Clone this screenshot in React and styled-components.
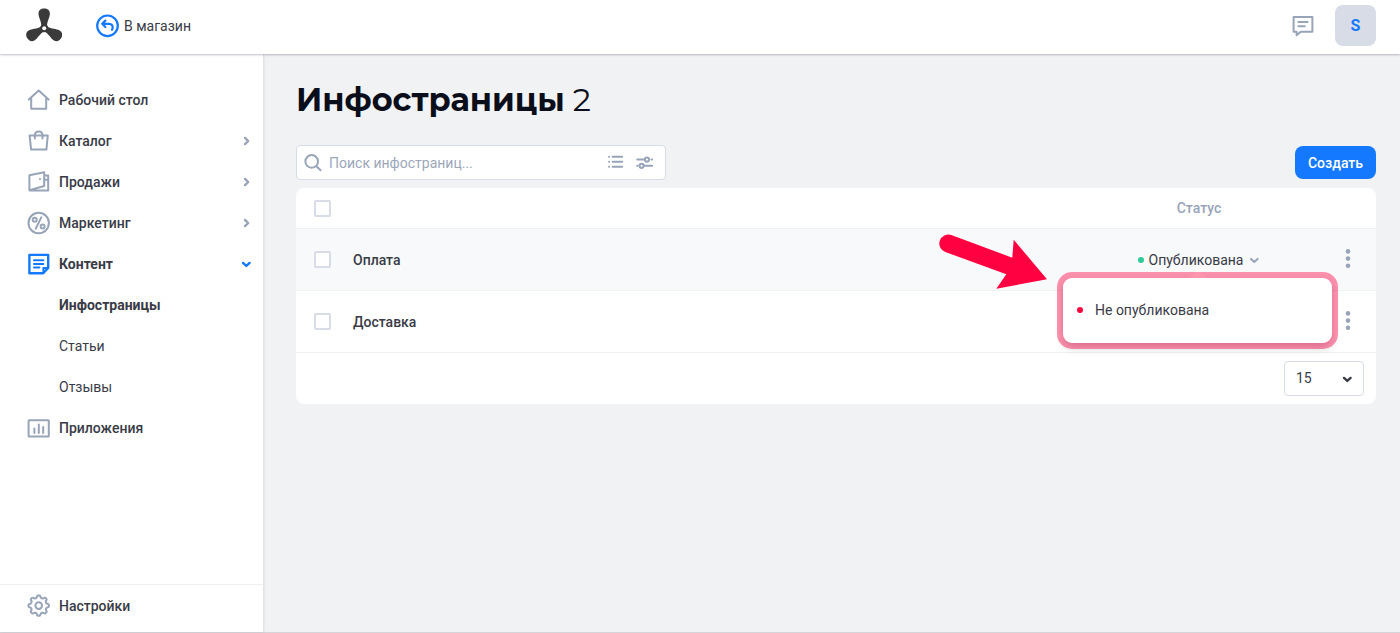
import React, {useState} from 'react';
import styled, {createGlobalStyle, css} from 'styled-components';

const colors = {
  text: '#393b47',
  title: '#0a0e1a',
  muted: '#98a4b8',
  line: '#d7dce6',
  primary: '#1479ff',
  danger: '#ff0040',
  success: '#2dcb96',
  page: '#f1f2f4',
};

const GlobalStyle = createGlobalStyle`
  * {
    box-sizing: border-box;
  }
  body {
    margin: 0;
    color: ${colors.text};
    background: ${colors.page};
    font: 400 14px/20px Roboto, 'Liberation Sans', sans-serif;
  }
  button, input, select {
    font: inherit;
    color: inherit;
  }
  button {
    padding: 0;
    border: 0;
    background: none;
    cursor: pointer;
  }
  a {
    color: inherit;
    text-decoration: none;
  }
`;

const Page = styled.div`
  display: flex;
  flex-direction: column;
  min-height: 100vh;
  border-bottom: 1px solid #d3d5d9;
`;

const Header = styled.header`
  display: flex;
  align-items: center;
  position: relative;
  z-index: 1;
  height: 54px;
  padding: 0 24px 3px 26px;
  background: white;
  box-shadow: 0 1px 2px rgba(40, 48, 70, 0.3);
`;

const Logo = styled.a`
  display: flex;
  margin-right: 34px;
`;

const StoreLink = styled.a`
  display: flex;
  align-items: center;
  gap: 4px;
  margin-right: auto;
`;

const IconButton = styled.button`
  display: flex;
  color: ${colors.muted};
`;

const Avatar = styled.button`
  width: 41px;
  height: 41px;
  margin-left: 20px;
  border-radius: 8px;
  background: ${colors.line};
  color: ${colors.primary};
  font-size: 16px;
  font-weight: 700;
`;

const Body = styled.div`
  display: flex;
  flex: 1;
`;

const Sidebar = styled.nav`
  display: flex;
  flex-direction: column;
  flex: 0 0 263px;
  padding-top: 25px;
  background: white;
  box-shadow: 1px 0 2px rgba(60, 70, 110, 0.12);
`;

const NavItem = styled.a`
  display: flex;
  align-items: center;
  gap: 8px;
  height: 41px;
  padding: 0 11px 0 27px;
  font-weight: ${p => (p.$active ? 700 : 500)};

  svg {
    color: ${p => (p.$active ? colors.primary : colors.muted)};
  }
  svg:last-child:not(:first-child) {
    margin-left: auto;
  }
  ${p => p.$sub && css`
    padding-left: 59px;
    font-weight: ${p.$active ? 700 : 400};
  `}
`;

const SidebarFooter = styled.div`
  margin-top: auto;
  padding-bottom: 6px;
  border-top: 1px solid #eff0f3;
`;

const Main = styled.main`
  flex: 1;
  min-width: 0;
  padding: 24px 24px 24px 33px;
`;

const Title = styled.h1`
  margin: 0 0 23px;
  color: ${colors.title};
  font: 700 32px/44px Montserrat, Inter, sans-serif;
`;

const Count = styled.span`
  margin-left: 8px;
  font-weight: 400;
`;

const Toolbar = styled.div`
  display: flex;
  align-items: center;
  justify-content: space-between;
  margin-bottom: 8px;
`;

const Search = styled.div`
  display: flex;
  align-items: center;
  gap: 4px;
  width: 370px;
  height: 35px;
  padding: 0 8px 0 4px;
  border: 1px solid ${colors.line};
  border-radius: 4px;
  background: white;
  color: ${colors.muted};

  label {
    display: flex;
  }
  input {
    flex: 1;
    min-width: 0;
    padding: 0;
    border: 0;
    outline: 0;
    background: none;
    color: ${colors.text};
  }
  input::placeholder {
    color: #9ca7b9;
    opacity: 1;
  }
`;

const CreateButton = styled.button`
  height: 33px;
  padding: 0 13px;
  border-radius: 8px;
  background: ${colors.primary};
  color: white;
  font-weight: 500;
`;

const Card = styled.section`
  border-radius: 8px;
  background: white;
`;

const Table = styled.table`
  width: 100%;
  border-spacing: 0;
  table-layout: fixed;
`;

const Cell = styled.td`
  width: ${p => p.$width || 'auto'};
  height: ${p => (p.as === 'th' ? '41px' : '62px')};
  padding: 0;
  border-bottom: 1px solid #f0f1f4;
  background: ${p => (p.$highlight ? '#f8f9fb' : 'transparent')};
  color: ${p => (p.as === 'th' ? colors.muted : colors.text)};
  text-align: ${p => p.$align || 'left'};
  font-weight: 500;
`;

const Checkbox = styled.input`
  appearance: none;
  display: block;
  width: 17px;
  height: 17px;
  margin: 0 0 0 18px;
  border: 2px solid ${colors.line};
  border-radius: 2px;
  background: white;

  &:checked {
    background: ${colors.primary};
  }
`;

const Status = styled.div`
  display: flex;
  justify-content: center;
  position: relative;
  font-weight: 400;
`;

const StatusButton = styled.button`
  display: flex;
  align-items: center;
  gap: 5px;

  svg {
    color: ${colors.muted};
  }
`;

const Dot = styled.span`
  width: 6px;
  height: 6px;
  border-radius: 50%;
  background: ${p => p.$color};
`;

const Dropdown = styled.div`
  position: absolute;
  top: 28px;
  left: 50%;
  z-index: 2;
  width: 269px;
  margin-left: -136px;
  border-radius: 9px;
  background: white;
  box-shadow: 0 4px 9px rgba(30, 36, 60, 0.3);

  &::before {
    content: '';
    position: absolute;
    top: -6px;
    left: 50%;
    width: 12px;
    height: 12px;
    margin-left: -6px;
    background: white;
    transform: rotate(45deg);
  }
  &::after {
    content: '';
    position: absolute;
    inset: -6px;
    border: 6px solid rgba(255, 0, 64, 0.42);
    border-radius: 15px;
    pointer-events: none;
  }
`;

const DropdownItem = styled.button`
  display: flex;
  align-items: center;
  gap: 12px;
  position: relative;
  width: 100%;
  height: 65px;
  padding: 0 14px;
  border-radius: 9px;
  background: white;
`;

const Pointer = styled.svg`
  position: absolute;
  top: -17px;
  right: 100%;
  z-index: 2;
  margin-right: 31px;
  pointer-events: none;
`;

const RowMenu = styled(IconButton)`
  margin: 0 auto;
`;

const CardFooter = styled.div`
  display: flex;
  justify-content: flex-end;
  padding: 8px 12px;
`;

const PageSize = styled.div`
  display: flex;
  align-items: center;
  position: relative;

  select {
    appearance: none;
    width: 80px;
    height: 35px;
    padding: 0 11px 2px;
    border: 1px solid ${colors.line};
    border-radius: 4px;
    background: white;
  }
  svg {
    position: absolute;
    right: 11px;
    pointer-events: none;
  }
`;

const Icon = ({size = 24, width = 2, children}) => (
  <svg width={size} height={size} viewBox={`0 0 ${size} ${size}`} fill="none" stroke="currentColor"
    strokeWidth={width} strokeLinecap="round" strokeLinejoin="round" aria-hidden="true">
    {children}
  </svg>
);

const ChevronIcon = ({down, width = 2.4}) => (
  <Icon size={12} width={width}>
    <path d={down ? 'M3 4.9 6.3 7.9l3.3-3' : 'M5 2.9 8.2 6 5 9.1'}/>
  </Icon>
);

const BLADE = 'M-2.8-1C-2.8-8-5.7-10-5.7-14.6C-5.7-17.8-3.4-19.7 0-19.7C3.4-19.7 5.7-17.8 5.7-14.6C5.7-10 2.8-8 2.8-1Z';

const PropellerLogo = () => (
  <svg width="36" height="36" viewBox="0 0 36 36" fill="#3a3a3a" aria-hidden="true">
    <g transform="translate(18.2 20.2)">
      {[0, 120, 240].map(angle => <path key={angle} d={BLADE} transform={`rotate(${angle})`}/>)}
      <circle r="4"/>
      <circle r="2" fill="white"/>
    </g>
  </svg>
);

// Eight rounded teeth around a centre of 11.7, 12
const GEAR = Array.from({length: 96}, (_, i) => {
  const a = (i / 96) * Math.PI * 2;
  const r = 9.1 + 1.15 * Math.tanh(2.2 * Math.cos(8 * a));
  return `${(11.7 + r * Math.cos(a)).toFixed(2)} ${(11.6 + r * Math.sin(a)).toFixed(2)}`;
}).join('L');

const icons = {
  home: <path d="M1.8 11.6 11.7 2.6l9.9 9M4.2 9.8v10.9h15V9.8"/>,
  catalog: <path d="M2.6 6.4h18.2l-1.4 14.2H4.1zM7.9 9.6V6.2c0-5 7.6-5 7.6 0v3.4"/>,
  sales: (
    <>
      <path d="M2.4 5.2 17.2 2.2v13.8L2.4 20.2zM17.4 5.6h3.8v14.8H2.6M17.4 9.8h3.6"/>
      <path d="M13 8.6v.8" strokeWidth="1.6"/>
    </>
  ),
  marketing: (
    <>
      <circle cx="11.7" cy="12" r="10.2"/>
      <circle cx="7.7" cy="8.8" r="2"/>
      <circle cx="15.6" cy="15.4" r="2"/>
      <path d="m14.3 6.4-5.6 11.4"/>
    </>
  ),
  content: (
    <>
      <path d="M2.4 2.9h18.8v13l-5 5.4H2.4z" strokeWidth="2.4"/>
      <path d="M20.8 16h-4.4v5M7 8.2h9.4M7 11.9h9.4M7 15.6h5.4"/>
    </>
  ),
  apps: (
    <>
      <rect x="1.6" y="4.2" width="20.2" height="16.4" rx=".6"/>
      <path d="M7.4 12.4v4.6M11.8 8.4V17M16.2 11v6"/>
    </>
  ),
  settings: (
    <>
      <path d={`M${GEAR}Z`}/>
      <circle cx="11.7" cy="11.6" r="3.3"/>
    </>
  ),
};

const menu = [
  {icon: 'home', title: 'Рабочий стол'},
  {icon: 'catalog', title: 'Каталог', nested: true},
  {icon: 'sales', title: 'Продажи', nested: true},
  {icon: 'marketing', title: 'Маркетинг', nested: true},
  {icon: 'content', title: 'Контент', nested: true, active: true},
  {sub: true, title: 'Инфостраницы', active: true},
  {sub: true, title: 'Статьи'},
  {sub: true, title: 'Отзывы'},
  {icon: 'apps', title: 'Приложения'},
];

const MenuLink = ({item}) => (
  <NavItem href="#" $active={item.active} $sub={item.sub}>
    {item.icon && <Icon>{icons[item.icon]}</Icon>}
    <span>{item.title}</span>
    {item.nested && <ChevronIcon down={item.active}/>}
  </NavItem>
);

const StatusSelect = () => {
  const [open, setOpen] = useState(true);

  return (
    <Status>
      <StatusButton aria-expanded={open} onClick={() => setOpen(!open)}>
        <Dot $color={colors.success}/>
        Опубликована
        <ChevronIcon down width={2}/>
      </StatusButton>
      {open && (
        <>
          <Dropdown>
            <DropdownItem onClick={() => setOpen(false)}>
              <Dot $color={colors.danger}/>
              Не опубликована
            </DropdownItem>
          </Dropdown>
          <Pointer width="110" height="58" viewBox="0 0 110 58" aria-hidden="true">
            <path fill={colors.danger} d="M13.3 2.1 74.3 24.7 75.7 6.7 109 46.3 58.3 55.7 68.3 41.3 7.3 19A8.9 8.9 0 0 1 13.3 2.1Z"/>
          </Pointer>
        </>
      )}
    </Status>
  );
};

const PageRow = ({title, highlight, children}) => (
  <tr>
    <Cell $highlight={highlight}><Checkbox type="checkbox" aria-label={title}/></Cell>
    <Cell $highlight={highlight}>{title}</Cell>
    <Cell $highlight={highlight}>{children}</Cell>
    <Cell $highlight={highlight}>
      <RowMenu aria-label="Действия">
        <svg width="8" height="22" viewBox="0 0 8 22" fill="currentColor">
          <circle cx="4" cy="2.4" r="2.3"/>
          <circle cx="4" cy="9.6" r="2.3"/>
          <circle cx="4" cy="16.8" r="2.3"/>
        </svg>
      </RowMenu>
    </Cell>
  </tr>
);

export default function App() {
  return (
    <Page>
      <GlobalStyle/>
      <Header>
        <Logo href="#" aria-label="Главная"><PropellerLogo/></Logo>
        <StoreLink href="#">
          <svg width="24" height="24" viewBox="0 0 24 24" fill="none" stroke={colors.primary}
            strokeWidth="2.2" strokeLinecap="round" strokeLinejoin="round" aria-hidden="true">
            <circle cx="11.5" cy="11.8" r="10.3"/>
            <path d="M9.4 6.6 6.2 9.8l3.2 3.2M6.6 9.8h6.2c4 0 4.6 3.4 3.2 6"/>
          </svg>
          В магазин
        </StoreLink>
        <IconButton aria-label="Сообщения">
          <Icon width={2}>
            <path d="M2.6 2.9h18.8v14.8H9.8l-4.2 3.4v-3.4h-3zM7.4 8h9.2M7.4 12.2h6.4"/>
          </Icon>
        </IconButton>
        <Avatar>S</Avatar>
      </Header>
      <Body>
        <Sidebar>
          {menu.map(item => <MenuLink key={item.title} item={item}/>)}
          <SidebarFooter>
            <MenuLink item={{icon: 'settings', title: 'Настройки'}}/>
          </SidebarFooter>
        </Sidebar>
        <Main>
          <Title>Инфостраницы<Count>2</Count></Title>
          <Toolbar>
            <Search>
              <label htmlFor="search" aria-label="Поиск">
                <Icon>
                  <circle cx="10.7" cy="10.4" r="6.3"/>
                  <path d="m15.4 15.2 4.2 4"/>
                </Icon>
              </label>
              <input id="search" placeholder="Поиск инфостраниц..."/>
              <IconButton aria-label="Список">
                <Icon width={2}>
                  <path d="M7.6 5.8h9.6M7.6 10.8h9.6M7.6 15.8h9.6M4 5.8h.1M4 10.8h.1M4 15.8h.1"/>
                </Icon>
              </IconButton>
              <IconButton aria-label="Фильтр">
                <Icon width={2}>
                  <path d="M4.2 8.6h7M18.6 8.6h.6M4.2 14.8h.4M11.6 14.8h7.6"/>
                  <circle cx="14" cy="8.6" r="2.1"/>
                  <circle cx="8.6" cy="14.8" r="2.1"/>
                </Icon>
              </IconButton>
            </Search>
            <CreateButton>Создать</CreateButton>
          </Toolbar>
          <Card>
            <Table>
              <thead>
                <tr>
                  <Cell as="th" $width="57px"><Checkbox type="checkbox" aria-label="Выбрать все"/></Cell>
                  <Cell as="th"/>
                  <Cell as="th" $width="240px" $align="center">Статус</Cell>
                  <Cell as="th" $width="57px"/>
                </tr>
              </thead>
              <tbody>
                <PageRow title="Оплата" highlight><StatusSelect/></PageRow>
                <PageRow title="Доставка"/>
              </tbody>
            </Table>
            <CardFooter>
              <PageSize>
                <select aria-label="Строк на странице" defaultValue="15">
                  <option>15</option>
                  <option>30</option>
                </select>
                <ChevronIcon down/>
              </PageSize>
            </CardFooter>
          </Card>
        </Main>
      </Body>
    </Page>
  );
}
